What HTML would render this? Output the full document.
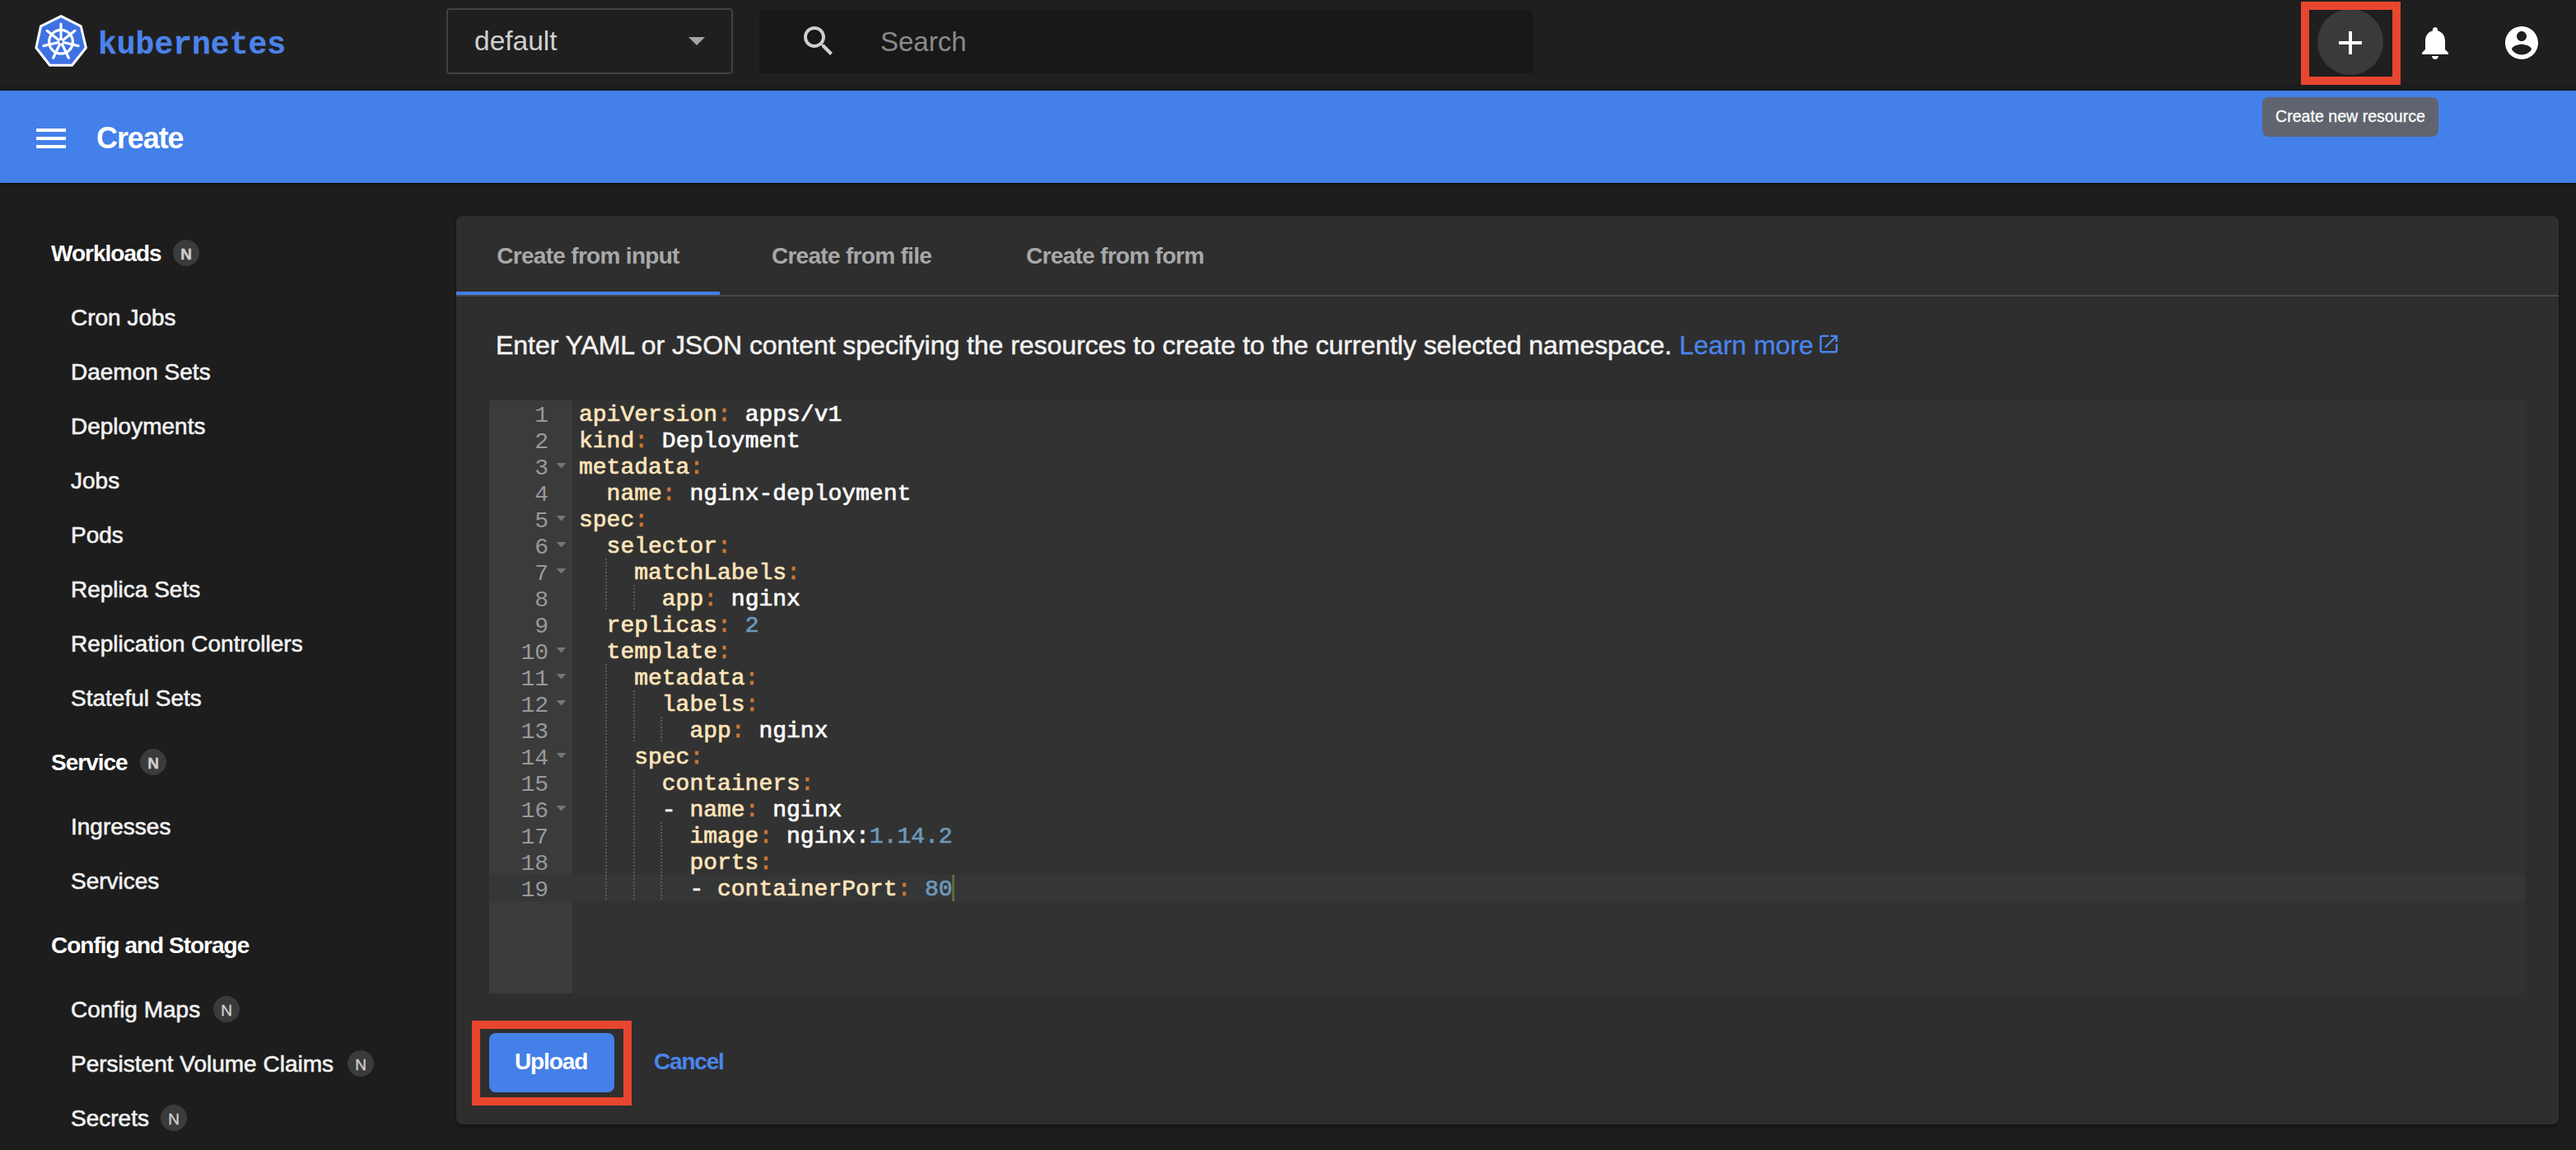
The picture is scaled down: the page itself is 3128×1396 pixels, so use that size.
<!DOCTYPE html>
<html><head><meta charset="utf-8">
<style>
html,body{margin:0;padding:0;}
body{width:3128px;height:1396px;overflow:hidden;position:relative;background:#1d1d1d;font-family:"Liberation Sans",sans-serif;}
.a{position:absolute;}
.t{position:absolute;white-space:pre;line-height:1;}
#topbar{left:0;top:0;width:3128px;height:110px;background:#1f1f1f;}
#bluebar{left:0;top:110px;width:3128px;height:112px;background:#4380ea;box-shadow:0 2px 4px rgba(0,0,0,.45);}
.hi{color:#f2f2f2;font-size:28px;-webkit-text-stroke:0.6px #f2f2f2;}
.hd{color:#ffffff;font-size:28px;font-weight:700;letter-spacing:-1px;}
.badge{position:absolute;width:32px;height:32px;border-radius:50%;background:#3b3b3b;color:#cfcfcf;font-size:19px;line-height:36px;text-align:center;-webkit-text-stroke:0.4px #cfcfcf;}
#card{left:554px;top:262px;width:2553px;height:1103px;background:#2e2e2e;border-radius:8px;box-shadow:0 2px 4px rgba(0,0,0,.45);}
.tab{position:absolute;top:0;width:320px;height:96px;color:#a8a8a8;font-size:28px;font-weight:700;letter-spacing:-0.7px;text-align:center;line-height:1;}
#editor{left:594px;top:486px;width:2472px;height:720px;background:#323232;}
#gutter{left:594px;top:486px;width:101px;height:720px;background:#3b3b3b;}
.ln{position:absolute;left:594px;width:72px;text-align:right;color:#999999;font-family:"Liberation Mono",monospace;font-size:28px;line-height:32px;}
.code{position:absolute;left:703px;font-family:"Liberation Mono",monospace;font-weight:400;-webkit-text-stroke:0.7px currentColor;font-size:28px;line-height:32px;white-space:pre;color:#ffffff;}
.k{color:#ffe5bb;}
.o{color:#cc7833;}
.n{color:#6c99bb;}
.guide{width:2px;background:repeating-linear-gradient(to bottom,#5a5a5a 0 2px,transparent 2px 4px);}
</style></head>
<body>
<!-- TOP BAR -->
<div id="topbar" class="a"></div>
<div class="a" style="left:0;top:101px;width:3128px;height:9px;background:#1c1c1e"></div>
<svg class="a" style="left:36px;top:12px" width="76" height="76" viewBox="36 12 76 76">
  <polygon points="74.20,19.68 98.23,31.84 104.41,57.96 87.50,79.24 60.52,79.24 43.89,57.96 49.50,31.84" fill="#3e72e4" stroke="#fff" stroke-width="3" stroke-linejoin="round"/>
  <circle cx="74" cy="50.8" r="14.4" fill="none" stroke="#fff" stroke-width="3.2"/>
  <line x1="74" y1="50.8" x2="74.00" y2="29.20" stroke="#fff" stroke-width="3.2" stroke-linecap="round"/><line x1="74" y1="50.8" x2="90.89" y2="37.33" stroke="#fff" stroke-width="3.2" stroke-linecap="round"/><line x1="74" y1="50.8" x2="95.06" y2="55.61" stroke="#fff" stroke-width="3.2" stroke-linecap="round"/><line x1="74" y1="50.8" x2="83.37" y2="70.26" stroke="#fff" stroke-width="3.2" stroke-linecap="round"/><line x1="74" y1="50.8" x2="64.63" y2="70.26" stroke="#fff" stroke-width="3.2" stroke-linecap="round"/><line x1="74" y1="50.8" x2="52.94" y2="55.61" stroke="#fff" stroke-width="3.2" stroke-linecap="round"/><line x1="74" y1="50.8" x2="57.11" y2="37.33" stroke="#fff" stroke-width="3.2" stroke-linecap="round"/>
  <circle cx="74" cy="50.8" r="4.2" fill="#fff"/>
  <circle cx="74" cy="50.8" r="2" fill="#3e72e4"/>
</svg>
<div class="t" style="left:119px;top:36px;font-family:'Liberation Mono',monospace;font-weight:700;font-size:38px;color:#4c83ea;-webkit-text-stroke:0.3px #4c83ea;">kubernetes</div>

<div class="a" style="left:542px;top:10px;width:344px;height:76px;border:2px solid #414141;border-radius:4px;"></div>
<div class="t" style="left:576px;top:32.5px;font-size:33.5px;color:#d0d0d0;">default</div>
<svg class="a" style="left:826px;top:29px" width="40" height="40" viewBox="2 2 20 20"><path d="M7 10l5 5 5-5z" fill="#a4a4a4"/></svg>

<div class="a" style="left:922px;top:12px;width:939px;height:77px;background:#181818;border-radius:2px;"></div>
<svg class="a" style="left:970px;top:26px" width="48" height="48" viewBox="0 0 24 24"><path fill="#cfcfcf" d="M15.5 14h-.79l-.28-.27C15.410 12.59 16 11.11 16 9.5 16 5.91 13.09 3 9.5 3S3 5.91 3 9.5 5.91 16 9.5 16c1.61 0 3.09-.59 4.23-1.57l.27.28v.79l5 4.99L20.49 19l-4.99-5zm-6 0C7.01 14 5 11.990 5 9.5S7.01 5 9.5 5 14 7.01 14 9.5 11.99 14 9.5 14z"/></svg>
<div class="t" style="left:1069px;top:34px;font-size:33px;color:#8a8a8a;">Search</div>

<div class="a" style="left:2814px;top:11px;width:80px;height:80px;border-radius:50%;background:#3a3a3a;"></div>
<svg class="a" style="left:2830px;top:28px" width="48" height="48" viewBox="0 0 24 24"><path fill="#fff" d="M19 13h-6v6h-2v-6H5v-2h6V5h2v6h6v2z"/></svg>
<div class="a" style="left:2794px;top:2px;width:101px;height:81px;border:10px solid #e8462e;"></div>
<svg class="a" style="left:2933px;top:28px" width="48" height="48" viewBox="0 0 24 24"><path fill="#fff" d="M12 22c1.1 0 2-.9 2-2h-4c0 1.1.89 2 2 2zm6-6v-5c0-3.070-1.64-5.64-4.5-6.32V4c0-.83-.67-1.5-1.5-1.5s-1.5.67-1.5 1.5v.68C7.63 5.36 6 7.92 6 11v5l-2 2v1h16v-1l-2-2z"/></svg>
<svg class="a" style="left:3038px;top:28px" width="48" height="48" viewBox="0 0 24 24"><path fill="#fff" d="M12 2C6.48 2 2 6.48 2 12s4.48 10 10 10 10-4.48 10-10S17.52 2 12 2zm0 3c1.66 0 3 1.34 3 3s-1.34 3-3 3-3-1.34-3-3 1.34-3 3-3zm0 14.2c-2.5 0-4.71-1.28-6-3.22.03-1.99 4-3.08 6-3.08 1.99 0 5.97 1.09 6 3.08-1.29 1.94-3.5 3.22-6 3.22z"/></svg>

<!-- BLUE BAR -->
<div id="bluebar" class="a"></div>
<div class="a" style="left:44px;top:156px;width:36px;height:4px;background:#fff"></div>
<div class="a" style="left:44px;top:166px;width:36px;height:4px;background:#fff"></div>
<div class="a" style="left:44px;top:176px;width:36px;height:4px;background:#fff"></div>
<div class="t" style="left:117px;top:150px;font-size:36px;font-weight:700;letter-spacing:-1.1px;color:#fff;">Create</div>

<div class="a" style="left:2747px;top:118px;width:214px;height:48px;border-radius:8px;background:#60646e;"></div>
<div class="t" style="left:2763px;top:131.8px;font-size:19.6px;color:#fff;-webkit-text-stroke:0.3px #fff;">Create new resource</div>

<!-- SIDEBAR -->
<div class="t hd" style="left:62px;top:294.0px;">Workloads</div>
<div class="badge" style="left:210px;top:291px;font-weight:700;">N</div>
<div class="t hi" style="left:86px;top:372.3px;">Cron Jobs</div>
<div class="t hi" style="left:86px;top:438.3px;">Daemon Sets</div>
<div class="t hi" style="left:86px;top:504.3px;">Deployments</div>
<div class="t hi" style="left:86px;top:570.3px;">Jobs</div>
<div class="t hi" style="left:86px;top:636.3px;">Pods</div>
<div class="t hi" style="left:86px;top:702.3px;">Replica Sets</div>
<div class="t hi" style="left:86px;top:768.3px;">Replication Controllers</div>
<div class="t hi" style="left:86px;top:834.3px;">Stateful Sets</div>
<div class="t hd" style="left:62px;top:912.0px;">Service</div>
<div class="badge" style="left:170px;top:909px;font-weight:700;">N</div>
<div class="t hi" style="left:86px;top:990.3px;">Ingresses</div>
<div class="t hi" style="left:86px;top:1056.3px;">Services</div>
<div class="t hd" style="left:62px;top:1134.0px;">Config and Storage</div>
<div class="t hi" style="left:86px;top:1212.3px;">Config Maps</div>
<div class="badge" style="left:259px;top:1209px;">N</div>
<div class="t hi" style="left:86px;top:1278.3px;">Persistent Volume Claims</div>
<div class="badge" style="left:422px;top:1275px;">N</div>
<div class="t hi" style="left:86px;top:1344.3px;">Secrets</div>
<div class="badge" style="left:195px;top:1341px;">N</div>

<!-- CARD -->
<div id="card" class="a"></div>
<div class="t tab" style="left:554px;top:296.7px;">Create from input</div>
<div class="t tab" style="left:874px;top:296.7px;">Create from file</div>
<div class="t tab" style="left:1194px;top:296.7px;">Create from form</div>
<div class="a" style="left:554px;top:358px;width:2553px;height:2px;background:#474747"></div>
<div class="a" style="left:554px;top:354px;width:320px;height:4px;background:#4480e8"></div>
<div class="t " style="left:602px;top:402.9px;font-size:32px;letter-spacing:-0.05px;color:#f2f2f2;-webkit-text-stroke:0.5px #f2f2f2;">Enter YAML or JSON content specifying the resources to create to the currently selected namespace. <span style="color:#4a85ec;-webkit-text-stroke:0.3px #4a85ec">Learn more</span></div>
<svg class="a" style="left:2206px;top:403px" width="29" height="29" viewBox="0 0 24 24"><path fill="#4a85ec" d="M19 19H5V5h7V3H5c-1.11 0-2 .9-2 2v14c0 1.1.89 2 2 2h14c1.1 0 2-.9 2-2v-7h-2v7zM14 3v2h3.59l-9.83 9.83 1.41 1.41L19 6.41V10h2V3h-7z"/></svg>
<div id="editor" class="a"></div>
<div id="gutter" class="a"></div>
<div class="a" style="left:695px;top:1062px;width:2371px;height:32px;background:#353637"></div>
<div class="a" style="left:594px;top:1062px;width:101px;height:32px;background:#353637"></div>
<div class="ln" style="top:489px;">1</div>
<div class="code" style="left:703.0px;top:487.5px;"><span class="k">apiVersion</span><span class="o">:</span> apps/v1</div>
<div class="ln" style="top:521px;">2</div>
<div class="code" style="left:703.0px;top:519.5px;"><span class="k">kind</span><span class="o">:</span> Deployment</div>
<div class="ln" style="top:553px;">3</div>
<svg class="a" style="left:676px;top:562px" width="11" height="7" viewBox="0 0 11 7"><path d="M0.5 0.5h10L5.5 6z" fill="#767676" stroke="#767676" stroke-width="1" stroke-linejoin="round"/></svg>
<div class="code" style="left:703.0px;top:551.5px;"><span class="k">metadata</span><span class="o">:</span></div>
<div class="ln" style="top:585px;">4</div>
<div class="code" style="left:736.6px;top:583.5px;"><span class="k">name</span><span class="o">:</span> nginx-deployment</div>
<div class="ln" style="top:617px;">5</div>
<svg class="a" style="left:676px;top:626px" width="11" height="7" viewBox="0 0 11 7"><path d="M0.5 0.5h10L5.5 6z" fill="#767676" stroke="#767676" stroke-width="1" stroke-linejoin="round"/></svg>
<div class="code" style="left:703.0px;top:615.5px;"><span class="k">spec</span><span class="o">:</span></div>
<div class="ln" style="top:649px;">6</div>
<svg class="a" style="left:676px;top:658px" width="11" height="7" viewBox="0 0 11 7"><path d="M0.5 0.5h10L5.5 6z" fill="#767676" stroke="#767676" stroke-width="1" stroke-linejoin="round"/></svg>
<div class="code" style="left:736.6px;top:647.5px;"><span class="k">selector</span><span class="o">:</span></div>
<div class="ln" style="top:681px;">7</div>
<svg class="a" style="left:676px;top:690px" width="11" height="7" viewBox="0 0 11 7"><path d="M0.5 0.5h10L5.5 6z" fill="#767676" stroke="#767676" stroke-width="1" stroke-linejoin="round"/></svg>
<div class="a guide" style="left:735.1px;top:678px;height:32px;"></div>
<div class="code" style="left:770.2px;top:679.5px;"><span class="k">matchLabels</span><span class="o">:</span></div>
<div class="ln" style="top:713px;">8</div>
<div class="a guide" style="left:735.1px;top:710px;height:32px;"></div>
<div class="a guide" style="left:768.7px;top:710px;height:32px;"></div>
<div class="code" style="left:803.8px;top:711.5px;"><span class="k">app</span><span class="o">:</span> nginx</div>
<div class="ln" style="top:745px;">9</div>
<div class="code" style="left:736.6px;top:743.5px;"><span class="k">replicas</span><span class="o">:</span> <span class="n">2</span></div>
<div class="ln" style="top:777px;">10</div>
<svg class="a" style="left:676px;top:786px" width="11" height="7" viewBox="0 0 11 7"><path d="M0.5 0.5h10L5.5 6z" fill="#767676" stroke="#767676" stroke-width="1" stroke-linejoin="round"/></svg>
<div class="code" style="left:736.6px;top:775.5px;"><span class="k">template</span><span class="o">:</span></div>
<div class="ln" style="top:809px;">11</div>
<svg class="a" style="left:676px;top:818px" width="11" height="7" viewBox="0 0 11 7"><path d="M0.5 0.5h10L5.5 6z" fill="#767676" stroke="#767676" stroke-width="1" stroke-linejoin="round"/></svg>
<div class="a guide" style="left:735.1px;top:806px;height:32px;"></div>
<div class="code" style="left:770.2px;top:807.5px;"><span class="k">metadata</span><span class="o">:</span></div>
<div class="ln" style="top:841px;">12</div>
<svg class="a" style="left:676px;top:850px" width="11" height="7" viewBox="0 0 11 7"><path d="M0.5 0.5h10L5.5 6z" fill="#767676" stroke="#767676" stroke-width="1" stroke-linejoin="round"/></svg>
<div class="a guide" style="left:735.1px;top:838px;height:32px;"></div>
<div class="a guide" style="left:768.7px;top:838px;height:32px;"></div>
<div class="code" style="left:803.8px;top:839.5px;"><span class="k">labels</span><span class="o">:</span></div>
<div class="ln" style="top:873px;">13</div>
<div class="a guide" style="left:735.1px;top:870px;height:32px;"></div>
<div class="a guide" style="left:768.7px;top:870px;height:32px;"></div>
<div class="a guide" style="left:802.3px;top:870px;height:32px;"></div>
<div class="code" style="left:837.4px;top:871.5px;"><span class="k">app</span><span class="o">:</span> nginx</div>
<div class="ln" style="top:905px;">14</div>
<svg class="a" style="left:676px;top:914px" width="11" height="7" viewBox="0 0 11 7"><path d="M0.5 0.5h10L5.5 6z" fill="#767676" stroke="#767676" stroke-width="1" stroke-linejoin="round"/></svg>
<div class="a guide" style="left:735.1px;top:902px;height:32px;"></div>
<div class="code" style="left:770.2px;top:903.5px;"><span class="k">spec</span><span class="o">:</span></div>
<div class="ln" style="top:937px;">15</div>
<div class="a guide" style="left:735.1px;top:934px;height:32px;"></div>
<div class="a guide" style="left:768.7px;top:934px;height:32px;"></div>
<div class="code" style="left:803.8px;top:935.5px;"><span class="k">containers</span><span class="o">:</span></div>
<div class="ln" style="top:969px;">16</div>
<svg class="a" style="left:676px;top:978px" width="11" height="7" viewBox="0 0 11 7"><path d="M0.5 0.5h10L5.5 6z" fill="#767676" stroke="#767676" stroke-width="1" stroke-linejoin="round"/></svg>
<div class="a guide" style="left:735.1px;top:966px;height:32px;"></div>
<div class="a guide" style="left:768.7px;top:966px;height:32px;"></div>
<div class="code" style="left:803.8px;top:967.5px;">- <span class="k">name</span><span class="o">:</span> nginx</div>
<div class="ln" style="top:1001px;">17</div>
<div class="a guide" style="left:735.1px;top:998px;height:32px;"></div>
<div class="a guide" style="left:768.7px;top:998px;height:32px;"></div>
<div class="a guide" style="left:802.3px;top:998px;height:32px;"></div>
<div class="code" style="left:837.4px;top:999.5px;"><span class="k">image</span><span class="o">:</span> nginx:<span class="n">1.14.2</span></div>
<div class="ln" style="top:1033px;">18</div>
<div class="a guide" style="left:735.1px;top:1030px;height:32px;"></div>
<div class="a guide" style="left:768.7px;top:1030px;height:32px;"></div>
<div class="a guide" style="left:802.3px;top:1030px;height:32px;"></div>
<div class="code" style="left:837.4px;top:1031.5px;"><span class="k">ports</span><span class="o">:</span></div>
<div class="ln" style="top:1065px;">19</div>
<div class="a guide" style="left:735.1px;top:1062px;height:32px;"></div>
<div class="a guide" style="left:768.7px;top:1062px;height:32px;"></div>
<div class="a guide" style="left:802.3px;top:1062px;height:32px;"></div>
<div class="code" style="left:837.4px;top:1063.5px;">- <span class="k">containerPort</span><span class="o">:</span> <span class="n">80</span></div>
<div class="a" style="left:1156px;top:1062px;width:3px;height:32px;background:#5b6b3a"></div>
<div class="a" style="left:594px;top:1254px;width:152px;height:72px;border-radius:8px;background:#4480e8"></div>
<div class="t " style="left:625px;top:1275.3px;font-size:28px;font-weight:700;letter-spacing:-1.1px;color:#fff;">Upload</div>
<div class="t " style="left:794px;top:1275.3px;font-size:28px;font-weight:700;letter-spacing:-1.2px;color:#4a85ec;">Cancel</div>
<div class="a" style="left:573px;top:1239px;width:174px;height:83px;border:10px solid #e8462e;"></div>
</body></html>
